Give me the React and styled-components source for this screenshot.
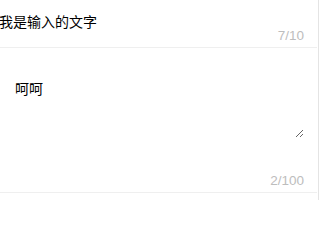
import React from "react";
import styled, { createGlobalStyle } from "styled-components";

const Global = createGlobalStyle`
  html, body { margin: 0; padding: 0; background: #fff; }
  body { font-family: "Liberation Sans", "Noto Sans CJK SC", sans-serif; }
`;

const Page = styled.div`
  display: flex;
  width: 320px;
  height: 200px;
  overflow: hidden;
  background: #fff;
`;

const List = styled.div`
  width: 317px;
  display: flex;
  flex-direction: column;
`;

const EdgeRule = styled.div`
  width: 1px;
  margin-left: 1px;
  background: #e4e4e4;
  flex: none;
`;

const Item = styled.div`
  display: flex;
  flex-direction: column;
  padding: ${(p) => p.$top}px 13px 5px 0;
  border-bottom: 1px solid #efefef;
`;

const TextInput = styled.input`
  display: block;
  box-sizing: border-box;
  height: 15px;
  margin: 0 0 0 -1px;
  padding: 0;
  border: none;
  outline: none;
  background: transparent;
  font: 14px/15px "Noto Sans CJK SC", sans-serif;
  color: #000;
`;

const TextArea = styled.textarea`
  display: block;
  box-sizing: border-box;
  width: 289px;
  height: 60px;
  margin: 0 0 0 15px;
  padding: 0;
  border: none;
  outline: none;
  background: transparent;
  font: 14px/20px "Noto Sans CJK SC", sans-serif;
  color: #000;
`;

const Counter = styled.div`
  margin-top: ${(p) => p.$gap || 0}px;
  text-align: right;
  font: 13.5px/13px "Liberation Sans", Arial, sans-serif;
  color: #bdbdbd;
`;

export default function App() {
  return (
    <>
      <Global />
      <Page>
        <List>
          <Item $top={14}>
            <TextInput defaultValue="我是输入的文字" maxLength={10} />
            <Counter>7/10</Counter>
          </Item>
          <Item $top={30}>
            <TextArea rows={3} defaultValue="呵呵" maxLength={100} />
            <Counter $gap={36}>2/100</Counter>
          </Item>
        </List>
        <EdgeRule />
      </Page>
    </>
  );
}
